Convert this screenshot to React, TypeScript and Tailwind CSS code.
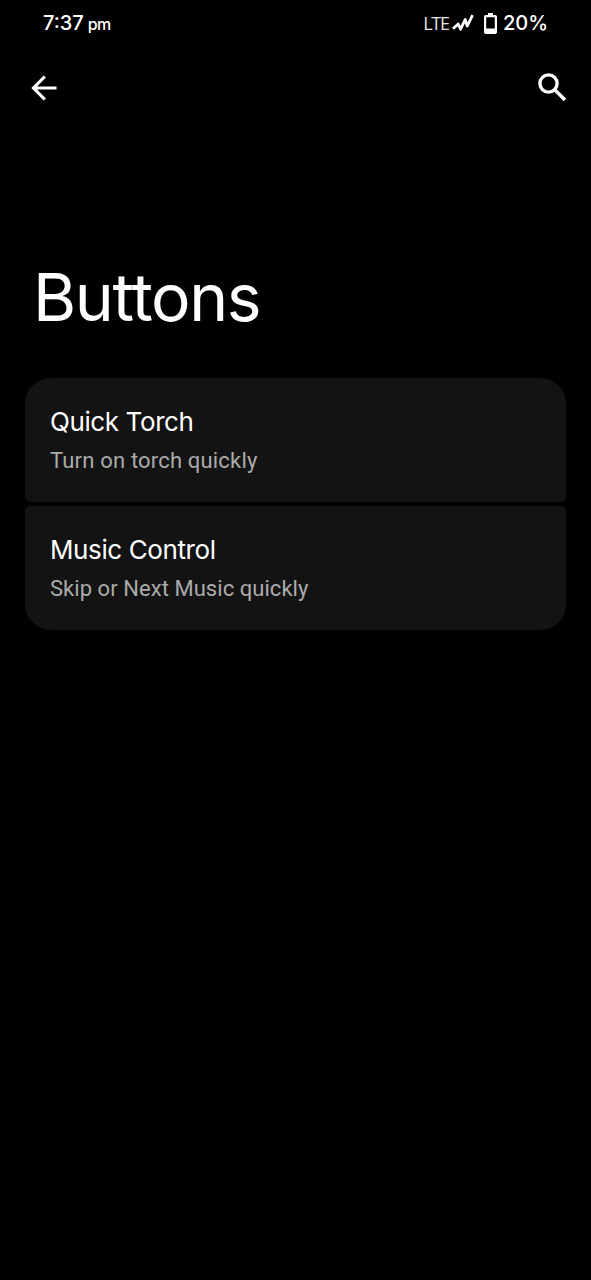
const items = [
  {
    title: "Quick Torch",
    titleSpacing: "tracking-[-0.4px]",
    summary: "Turn on torch quickly",
    summarySpacing: "tracking-[0.18px]",
    shape: "rounded-t-[26px] rounded-b-[5px]",
  },
  {
    title: "Music Control",
    titleSpacing: "tracking-[-0.4px]",
    summary: "Skip or Next Music quickly",
    summarySpacing: "tracking-[0.05px]",
    shape: "rounded-t-[5px] rounded-b-[26px]",
  },
];

function StatusBar() {
  return (
    <div className="flex h-[46px] items-center pl-[43px] pr-[43px]">
      <div className="flex items-baseline gap-[4px] leading-[30px]">
        <span className="text-[20px] font-medium">7:37</span>
        <span className="text-[16px] font-medium tracking-[-0.6px]">pm</span>
      </div>
      <div className="ml-auto flex items-center">
        <span className="mb-px font-['Open_Sans',sans-serif] text-[18px] font-normal leading-[30px] tracking-[-1.2px] text-[#e4e4e4]">LTE</span>
        <svg className="ml-[3px] h-[18px] w-[22px]" viewBox="0 0 22 18" fill="none" stroke="currentColor" strokeWidth="2.8">
          <path d="M1 14.800 6.200 10 8.600 15.200 13.200 5.500 15.300 12 20.600 1.200" strokeLinejoin="round" />
        </svg>
        <svg className="ml-[10px] h-[21px] w-[13px]" viewBox="0 0 13 21" fill="currentColor">
          <path d="M4 0h5v2h2.2Q13 2 13 3.8v15.4Q13 21 11.2 21H1.8Q0 21 0 19.200V3.800Q0 2 1.800 2H4ZM2.200 4.300V15.500h8.600V4.300Z" fillRule="evenodd" />
        </svg>
        <span className="ml-[6px] text-[20px] font-medium leading-[30px]">20%</span>
      </div>
    </div>
  );
}

export default function App() {
  return (
    <div className="h-[1280px] w-[591px] overflow-hidden bg-black font-['Inter',sans-serif] text-white">
      <StatusBar />
      <header className="flex h-[84px] items-center justify-between pl-[31px] pr-[25px]">
        <button aria-label="Back" className="block">
          <svg className="h-[26px] w-[26px]" viewBox="0 0 26 26" fill="none" stroke="currentColor" strokeWidth="3.2">
            <path d="M13.800 1.500 2.500 13 13.800 24.500M2.500 13H25.500" />
          </svg>
        </button>
        <button aria-label="Search" className="mb-[2px] block">
          <svg className="h-[28px] w-[28px]" viewBox="0 0 28 28" fill="none" stroke="currentColor" strokeWidth="3.4">
            <circle cx="10.500" cy="10.500" r="8.600" />
            <path d="M16.500 16.500 27 27" />
          </svg>
        </button>
      </header>
      <h1 className="mt-[127px] pl-[33px] text-[66px] font-normal leading-[80px] tracking-[-1.4px]">
        Bu<span className="tracking-[-2.6px]">t</span>tons
      </h1>
      <main className="mt-[40.5px] flex flex-col gap-[4px] px-[25px]">
        {items.map((item) => (
          <section key={item.title} className={`h-[124px] bg-[#131313] pl-[25px] pt-[27px] ${item.shape}`}>
            <h2 className={`text-[26px] font-normal leading-[34px] ${item.titleSpacing}`}>{item.title}</h2>
            <p className={`mt-[7px] font-['Roboto',sans-serif] text-[22px] leading-[30px] text-[#ababab] ${item.summarySpacing}`}>
              {item.summary}
            </p>
          </section>
        ))}
      </main>
    </div>
  );
}
